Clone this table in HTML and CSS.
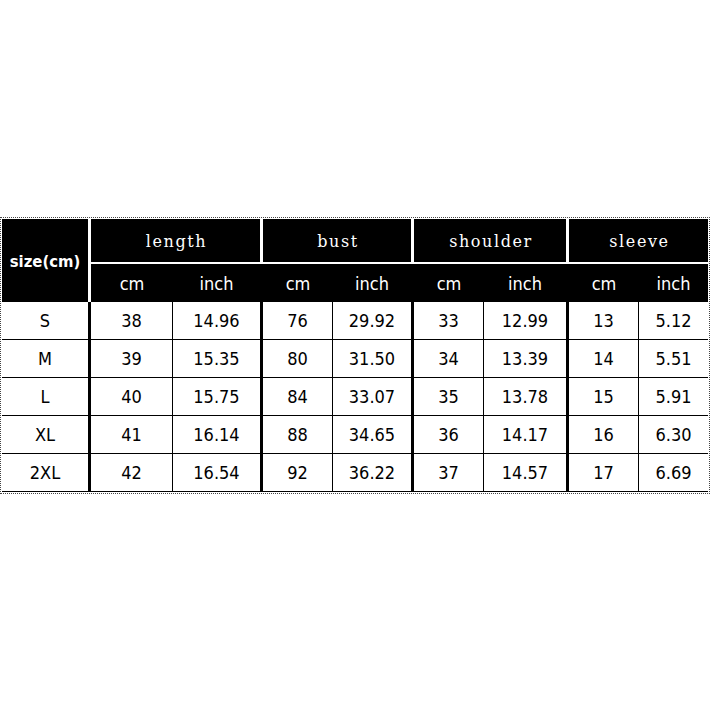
FILE: index.html
```html
<!DOCTYPE html>
<html>
<head>
<meta charset="utf-8">
<link rel="stylesheet" href="styles.css">
</head>
<body>
<div class="frame">
  <div class="chart">
    <div class="cell head size-label">size(cm)</div>
    <div class="cell head group g-thick span2">length</div>
    <div class="cell head group g-thick span2">bust</div>
    <div class="cell head group g-thick span2">shoulder</div>
    <div class="cell head group span2">sleeve</div>

    <div class="cell head unit">cm</div>
    <div class="cell head unit g-thick">inch</div>
    <div class="cell head unit">cm</div>
    <div class="cell head unit g-thick">inch</div>
    <div class="cell head unit">cm</div>
    <div class="cell head unit g-thick">inch</div>
    <div class="cell head unit">cm</div>
    <div class="cell head unit">inch</div>

    <div class="cell val thick">S</div><div class="cell val thin">38</div><div class="cell val thick">14.96</div><div class="cell val thin">76</div><div class="cell val thick">29.92</div><div class="cell val thin">33</div><div class="cell val thick">12.99</div><div class="cell val thin">13</div><div class="cell val">5.12</div>
    <div class="cell val thick">M</div><div class="cell val thin">39</div><div class="cell val thick">15.35</div><div class="cell val thin">80</div><div class="cell val thick">31.50</div><div class="cell val thin">34</div><div class="cell val thick">13.39</div><div class="cell val thin">14</div><div class="cell val">5.51</div>
    <div class="cell val thick">L</div><div class="cell val thin">40</div><div class="cell val thick">15.75</div><div class="cell val thin">84</div><div class="cell val thick">33.07</div><div class="cell val thin">35</div><div class="cell val thick">13.78</div><div class="cell val thin">15</div><div class="cell val">5.91</div>
    <div class="cell val thick">XL</div><div class="cell val thin">41</div><div class="cell val thick">16.14</div><div class="cell val thin">88</div><div class="cell val thick">34.65</div><div class="cell val thin">36</div><div class="cell val thick">14.17</div><div class="cell val thin">16</div><div class="cell val">6.30</div>
    <div class="cell val thick">2XL</div><div class="cell val thin">42</div><div class="cell val thick">16.54</div><div class="cell val thin">92</div><div class="cell val thick">36.22</div><div class="cell val thin">37</div><div class="cell val thick">14.57</div><div class="cell val thin">17</div><div class="cell val">6.69</div>
  </div>
</div>
</body>
</html>
```
FILE: styles.css
```css
html, body {
  margin: 0;
  padding: 0;
  background: #fff;
}
.frame {
  margin-top: 217px;
  border: 1px dotted #444;
  padding: 1px;
  box-sizing: border-box;
  width: 710px;
}
.chart {
  display: grid;
  grid-template-columns: 89px 82px 90px 70px 81px 70px 85px 70px 69px;
  grid-template-rows: 45px 38px repeat(5, 38px);
}
.cell {
  box-sizing: border-box;
  display: flex;
  align-items: center;
  justify-content: center;
}
.span2 {
  grid-column: span 2;
}
.head {
  background: #000;
  color: #fff;
}
.size-label {
  grid-row: span 2;
  border-right: 3px solid #fff;
  font-family: "DejaVu Sans Condensed", "DejaVu Sans", sans-serif;
  font-weight: bold;
  font-size: 16.5px;
  padding-top: 2px;
}
.group {
  border-bottom: 2px solid #fff;
  font-family: "DejaVu Serif", "Liberation Serif", serif;
  font-size: 16px;
  letter-spacing: 1.6px;
  padding-top: 1px;
  padding-left: 2px;
}
.head.g-thick {
  border-right: 3px solid #fff;
}
.unit {
  font-family: "DejaVu Sans Condensed", "DejaVu Sans", sans-serif;
  font-size: 18px;
}
.unit.g-thick {
  border-right: 3px solid #000;
}
.val {
  border-bottom: 1px solid #000;
  font-family: "DejaVu Sans Condensed", "DejaVu Sans", sans-serif;
  font-size: 18px;
  color: #000;
}
.val.thick {
  border-right: 3px solid #000;
}
.val.thin {
  border-right: 1px solid #000;
}
```
